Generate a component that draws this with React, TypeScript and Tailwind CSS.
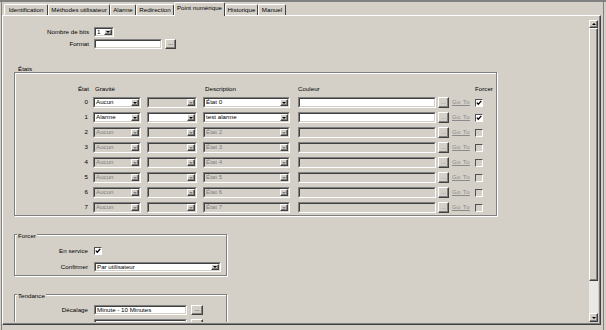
import clsx from "clsx";
import type { ReactNode } from "react";

const sunken = "border border-t-[#808080] border-l-[#808080] border-b-white border-r-white";
const sunkenIn = "border border-t-[#404040] border-l-[#404040] border-b-[#d4d0c8] border-r-[#d4d0c8]";
const raised =
  "border border-t-white border-l-white border-b-[#404040] border-r-[#404040] shadow-[inset_-1px_-1px_0_#808080]";

const DropBtn = ({ off }: { off?: boolean }) => (
  <div className={clsx("w-[8px] h-full shrink-0 flex items-center justify-center bg-[#d4d0c8]", raised)}>
    <div
      className={clsx(
        "w-0 h-0 border-x-[2px] border-x-transparent border-t-[2px]",
        off ? "border-t-[#808080]" : "border-t-black"
      )}
    />
  </div>
);

const Field = ({
  w,
  h = "h-[11px]",
  text,
  off,
  drop,
}: {
  w: string;
  h?: string;
  text?: string;
  off?: boolean;
  drop?: boolean;
}) => (
  <div className={clsx(w, h, "flex shrink-0", sunken)}>
    <div
      className={clsx(
        "flex flex-1 min-w-0",
        sunkenIn,
        off ? "bg-[#d4d0c8] text-[#808080]" : "bg-white text-black"
      )}
    >
      <span className="flex-1 pl-[1px] flex items-center whitespace-nowrap overflow-hidden">{text}</span>
      {drop && <DropBtn off={off} />}
    </div>
  </div>
);

const Dots = ({ className, off, blank }: { className: string; off?: boolean; blank?: boolean }) => (
  <div
    className={clsx(
      className,
      "shrink-0 flex items-center justify-center bg-[#d4d0c8]",
      raised,
      off ? "text-[#808080]" : "text-black"
    )}
  >
    {!blank && <span className="leading-none pb-[1px]">...</span>}
  </div>
);

const Check = ({ on, off }: { on?: boolean; off?: boolean }) => (
  <div
    className={clsx(
      "w-[8px] h-[8px] shrink-0 flex items-center justify-center border border-t-[#505050] border-l-[#505050] border-b-white border-r-white",
      off ? "bg-[#d4d0c8]" : "bg-white"
    )}
  >
    {on && (
      <svg width="6" height="6" viewBox="0 0 6 6">
        <path d="M0.8 2.6 L2.3 4.2 L5.3 0.9" fill="none" stroke="black" strokeWidth="1.3" />
      </svg>
    )}
  </div>
);

const Group = ({
  label,
  className,
  labelTop,
  children,
}: {
  label: string;
  className: string;
  labelTop: string;
  children: ReactNode;
}) => (
  <div
    className={clsx(
      "relative shrink-0 flex flex-col border border-[#808080] shadow-[inset_1px_1px_0_#fff,1px_1px_0_#fff]",
      className
    )}
  >
    <span className={clsx("absolute left-[2px] px-[1px] bg-[#d4d0c8] leading-[7px]", labelTop)}>{label}</span>
    {children}
  </div>
);

const tabs = [
  { t: "Identification", w: "w-[44px]" },
  { t: "Méthodes utilisateur", w: "w-[62px]" },
  { t: "Alarme", w: "w-[26px]" },
  { t: "Redirection", w: "w-[38px]" },
  { t: "Point numérique", w: "w-[51px]", on: true },
  { t: "Historique", w: "w-[33px]" },
  { t: "Manuel", w: "w-[28px]" },
];

const states = [0, 1, 2, 3, 4, 5, 6, 7];

export default function App() {
  return (
    <div className="w-[606px] h-[330px] overflow-hidden flex bg-[#d4d0c8] border-t-2 border-t-[#808080] pl-[1px] pr-[2px] text-black text-[6.2px] leading-none font-['Liberation_Sans',Arial,sans-serif]">
      <div className="flex-1 flex flex-col border-l border-r border-[#808080]">
        {/* tabs */}
        <div className="h-[13px] flex items-end pl-[2px]">
          {tabs.map((tab) =>
            tab.on ? (
              <div
                key={tab.t}
                className={clsx(
                  tab.w,
                  "h-[14px] -mb-[1px] relative z-10 bg-[#d4d0c8] flex items-center justify-center pb-[2px] whitespace-nowrap rounded-t-[2px] border-t border-l border-r border-t-white border-l-white border-r-[#404040]"
                )}
              >
                {tab.t}
              </div>
            ) : (
              <div
                key={tab.t}
                className={clsx(
                  tab.w,
                  "h-[11px] flex items-center justify-center whitespace-nowrap rounded-t-[2px] border-t border-l border-r border-t-white border-l-white border-r-[#404040]"
                )}
              >
                {tab.t}
              </div>
            )
          )}
        </div>

        {/* tab page */}
        <div className="w-[599px] h-[310px] flex border-t border-l border-r border-b border-t-white border-l-white border-r-[#404040] border-b-[#404040] shadow-[inset_-1px_-1px_0_#808080] pt-[4px] pr-[2px] pb-[2px]">
          <div className="w-[585px] h-[302px] overflow-hidden flex flex-col">
            <div className="flex items-center mt-[7px] h-[10px]">
              <div className="w-[91px] pr-[5px] text-right">Nombre de bits</div>
              <Field w="w-[20px]" h="h-[10px]" text="1" drop />
            </div>
            <div className="flex items-center mt-[2px] h-[10px]">
              <div className="w-[91px] pr-[5px] text-right">Format</div>
              <Field w="w-[68px]" h="h-[10px]" />
              <Dots className="ml-[3px] w-[11px] h-[10px]" />
            </div>

            <Group label="États" labelTop="top-[-8px]" className="mt-[23px] ml-[11px] w-[483px] h-[144px]">
              <div className="flex items-center mt-[13px] h-[7px] whitespace-nowrap">
                <div className="w-[74px] text-right">État</div>
                <div className="ml-[4px] w-[48px] pl-[2px]">Gravité</div>
                <div className="ml-[6px] w-[50px]" />
                <div className="ml-[6px] w-[87px] pl-[2px]">Description</div>
                <div className="ml-[8px] w-[138px]">Couleur</div>
                <div className="ml-[2px] w-[11px]" />
                <div className="ml-[3px] w-[18px]" />
                <div className="ml-[5px] w-[8px]">Forcer</div>
              </div>
              <div className="flex flex-col gap-[4px] mt-[4px]">
                {states.map((n) => {
                  const off = n > 1;
                  return (
                    <div key={n} className="flex items-center h-[11px]">
                      <div className="w-[74px] pr-[1px] text-right">{n}</div>
                      <div className="ml-[4px]">
                        <Field w="w-[48px]" text={n === 1 ? "Alarme" : "Aucun"} off={off} drop />
                      </div>
                      <div className="ml-[6px]">
                        <Field w="w-[50px]" off={n !== 1} drop />
                      </div>
                      <div className="ml-[6px]">
                        <Field w="w-[87px]" text={n === 1 ? "test alarme" : `État ${n}`} off={off} drop />
                      </div>
                      <div className="ml-[8px]">
                        <Field w="w-[138px]" off={off} />
                      </div>
                      <Dots className="ml-[2px] w-[11px] h-[11px]" off />
                      <div className="ml-[3px] w-[18px] text-[#8a8a8a] underline tracking-[0.3px] whitespace-nowrap">
                        Go To
                      </div>
                      <div className="ml-[5px]">
                        <Check on={!off} off={off} />
                      </div>
                    </div>
                  );
                })}
              </div>
            </Group>

            <Group label="Forcer" labelTop="top-[-3px]" className="mt-[18px] ml-[11px] w-[213px] h-[42px]">
              <div className="flex items-center mt-[12px] h-[8px]">
                <div className="w-[79px] pr-[6px] text-right">En service</div>
                <Check on />
              </div>
              <div className="flex items-center mt-[7px] h-[10px]">
                <div className="w-[79px] pr-[6px] text-right">Confirmer</div>
                <Field w="w-[127px]" h="h-[10px]" text="Par utilisateur" drop />
              </div>
            </Group>

            <Group label="Tendance" labelTop="top-[-3px]" className="mt-[18px] ml-[11px] w-[213px] h-[60px]">
              <div className="flex items-center mt-[10px] h-[10px]">
                <div className="w-[79px] pr-[6px] text-right">Décalage</div>
                <Field w="w-[93px]" h="h-[10px]" text="Minute - 10 Minutes" />
                <Dots className="ml-[4px] w-[12px] h-[10px]" />
              </div>
              <div className="flex items-center mt-[4px] h-[10px]">
                <div className="w-[79px]" />
                <Field w="w-[93px]" h="h-[10px]" />
                <Dots className="ml-[4px] w-[12px] h-[10px]" blank />
              </div>
            </Group>
          </div>

          {/* scrollbar */}
          <div className="ml-[1px] w-[9px] h-[302px] flex flex-col">
            <div className={clsx("h-[8px] flex items-center justify-center bg-[#d4d0c8]", raised)}>
              <div className="w-0 h-0 border-x-[2px] border-x-transparent border-b-[2px] border-b-black" />
            </div>
            <div className={clsx("h-[253px] bg-[#d4d0c8]", raised)} />
            <div className="flex-1 bg-[#ebe9e5]" />
            <div className={clsx("h-[9px] flex items-center justify-center bg-[#d4d0c8]", raised)}>
              <div className="w-0 h-0 border-x-[2px] border-x-transparent border-t-[2px] border-t-black" />
            </div>
          </div>
        </div>
      </div>
    </div>
  );
}
